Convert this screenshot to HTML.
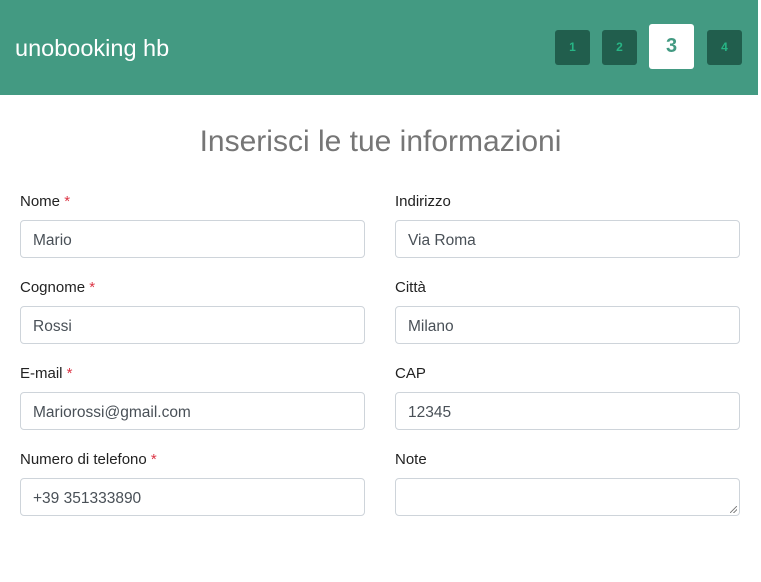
<!DOCTYPE html><html><head><style>
body{margin:0;width:761px;height:582px;background:#fff;font-family:"Liberation Sans",sans-serif;overflow:hidden;position:relative}
.hd{position:absolute;left:0;top:0;width:758px;height:95px;background:#439a82}
.t{position:absolute;left:15px;top:35px;color:#fff;font-size:23.5px}
.b{position:absolute;top:30px;width:35px;height:35px;background:#215e4d;border-radius:3px;color:#27b585;font-size:12px;font-weight:bold;text-align:center;line-height:35px}
.b3{top:24px;width:45px;height:45px;line-height:45px;background:#fff;color:#439a82;font-size:20px}
h1{position:absolute;left:0;width:761px;top:125px;margin:0;text-align:center;font-weight:normal;font-size:30px;color:#767676}
.l{position:absolute;font-size:15px;color:#222;top:1px}
.l span{color:#dc3545}
.i{position:absolute;width:343px;height:36px;border:1px solid #ced4da;border-radius:4px;box-sizing:content-box;font-size:15.5px;color:#495057;line-height:40px;text-indent:12px}
.rz{position:absolute;right:2px;bottom:2px;width:7px;height:7px;background:linear-gradient(135deg,transparent 45%,#888 45%,#888 55%,transparent 55%,transparent 70%,#888 70%,#888 80%,transparent 80%)}
</style></head><body>
<div class="hd"><div class="t">unobooking hb</div>
<div class="b" style="left:555px">1</div><div class="b" style="left:602px">2</div><div class="b b3" style="left:649px">3</div><div class="b" style="left:707px">4</div></div>
<h1>Inserisci le tue informazioni</h1>
<div class="l" style="left:20px;top:193px">Nome <span>*</span></div><div class="i" style="left:20px;top:220px">Mario</div>
<div class="l" style="left:395px;top:193px">Indirizzo</div><div class="i" style="left:395px;top:220px">Via Roma</div>
<div class="l" style="left:20px;top:279px">Cognome <span>*</span></div><div class="i" style="left:20px;top:306px">Rossi</div>
<div class="l" style="left:395px;top:279px">Città</div><div class="i" style="left:395px;top:306px">Milano</div>
<div class="l" style="left:20px;top:365px">E-mail <span>*</span></div><div class="i" style="left:20px;top:392px">Mariorossi@gmail.com</div>
<div class="l" style="left:395px;top:365px">CAP</div><div class="i" style="left:395px;top:392px">12345</div>
<div class="l" style="left:20px;top:451px">Numero di telefono <span>*</span></div><div class="i" style="left:20px;top:478px">+39 351333890</div>
<div class="l" style="left:395px;top:451px">Note</div><div class="i" style="left:395px;top:478px"><div class="rz"></div></div>
</body></html>
